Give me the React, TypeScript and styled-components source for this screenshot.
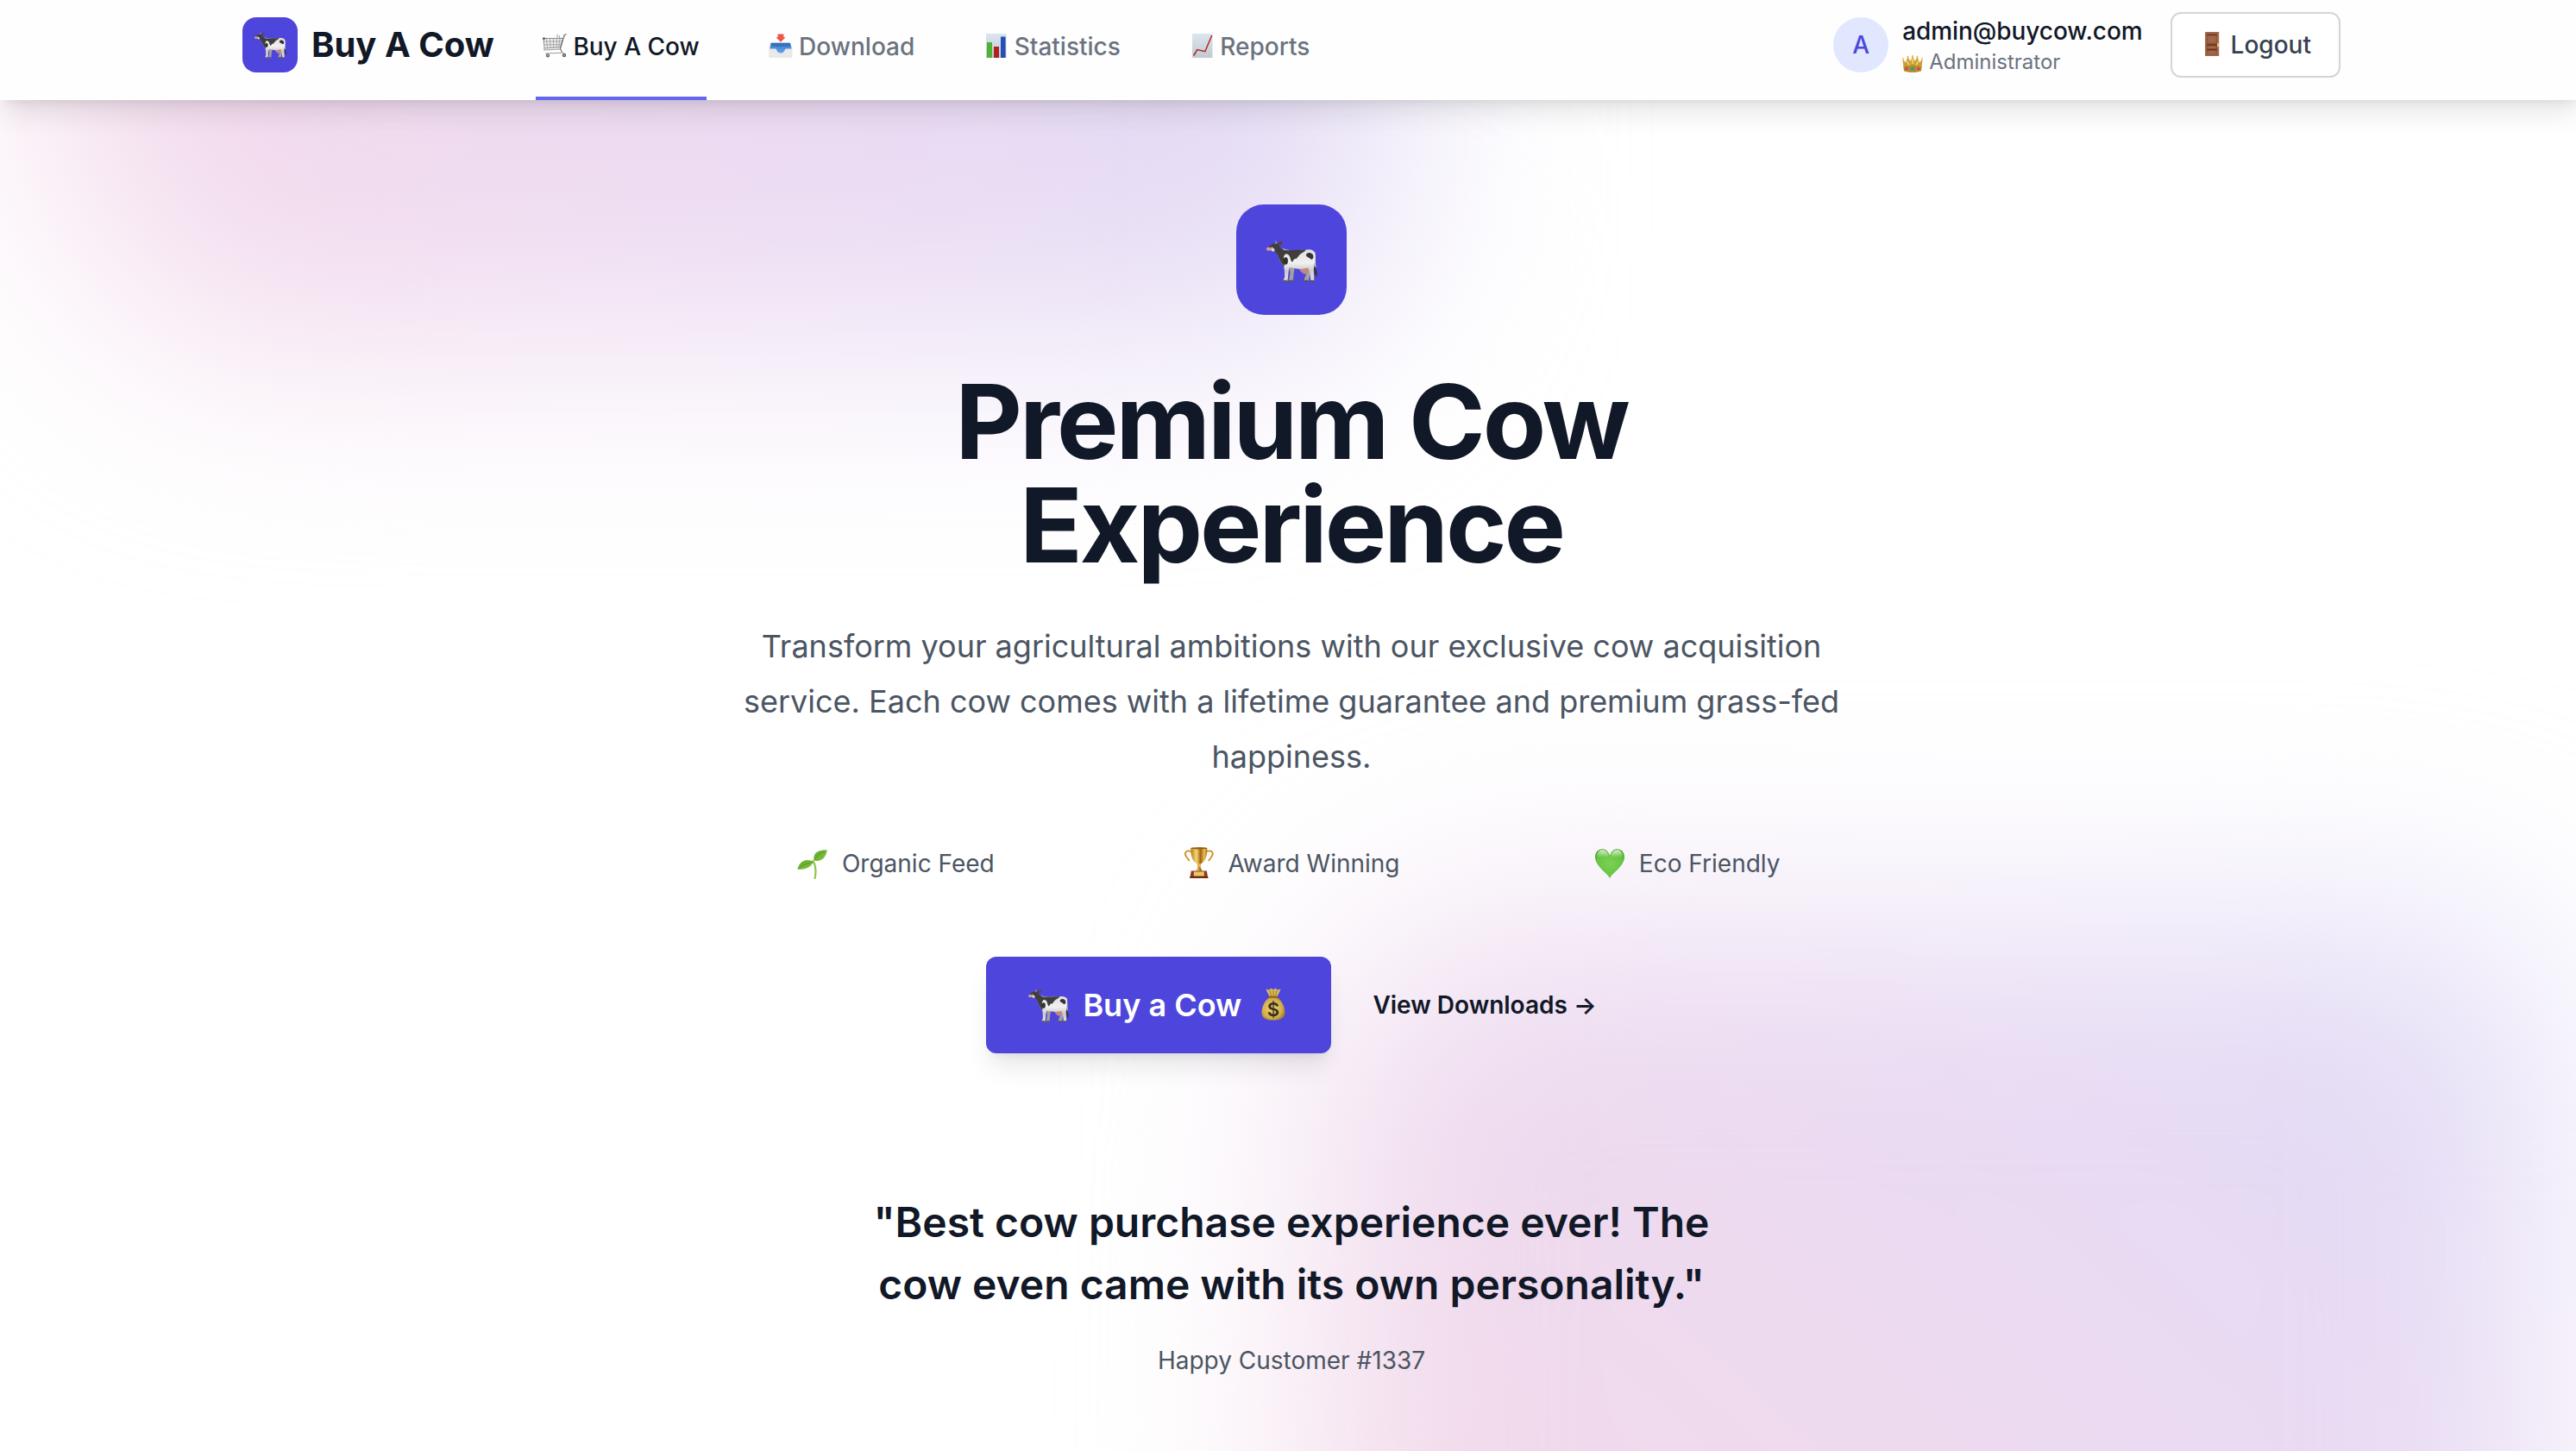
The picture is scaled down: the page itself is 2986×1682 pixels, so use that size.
import React from 'react';
import styled, { createGlobalStyle, css } from 'styled-components';

const GlobalStyle = createGlobalStyle`
  *, *::before, *::after { box-sizing: border-box; }
  html, body { margin: 0; padding: 0; background: #ffffff; }
  body {
    overflow: hidden;
    font-family: Inter, "Liberation Sans", sans-serif;
    color: #111827;
    -webkit-font-smoothing: antialiased;
  }
`;

/* ---------- shell ---------- */

const Page = styled.div`
  position: relative;
  isolation: isolate;
  width: 2994px;
  height: 1682px;
  overflow: hidden;
  display: flex;
  flex-direction: column;
  background: #ffffff;
`;

const Backdrop = styled.div`
  position: absolute;
  inset: 0;
  z-index: -1;
  overflow: hidden;
`;

const Glow = styled.div<{ $place: 'top' | 'bottom' }>`
  position: absolute;
  filter: blur(128px);
  ${({ $place }) =>
    $place === 'top'
      ? css`
          left: -80px;
          top: -520px;
          width: 1690px;
          height: 920px;
          & > div {
            background: linear-gradient(78deg, #f3d9eb 14%, #ebdaf2 54%, #e3dbf5 88%);
            clip-path: polygon(5% 0, 100% 0, 100% 86%, 94% 100%, 18% 100%, 9% 80%);
          }
        `
      : css`
          left: 1520px;
          top: 1070px;
          width: 1430px;
          height: 1000px;
          & > div {
            background: linear-gradient(42deg, #f2d9ea 22%, #ebdaf1 56%, #e2dbf6 88%);
            clip-path: polygon(1% 14%, 10% 0, 94% 0, 100% 8%, 100% 100%, 0 100%);
          }
        `}
`;

const GlowShape = styled.div`
  width: 100%;
  height: 100%;
`;

/* ---------- header ---------- */

const Header = styled.header`
  flex: none;
  height: 116px;
  background: #fefefe;
  box-shadow: 0 20px 30px -6px rgba(0, 0, 0, 0.1), 0 8px 12px -8px rgba(0, 0, 0, 0.1);
`;

const HeaderInner = styled.div`
  width: 2560px;
  height: 116px;
  margin: 0 auto;
  padding: 0 64px;
  display: flex;
  justify-content: space-between;
`;

const Cluster = styled.div<{ $gap: number }>`
  display: flex;
  align-items: center;
  height: 104px;
  gap: ${({ $gap }) => $gap}px;
`;

const Brand = styled.div`
  display: flex;
  align-items: center;
  gap: 16px;
  width: 292px;
  white-space: nowrap;
`;

const Tile = styled.div<{ $size: number; $radius: number }>`
  flex: none;
  display: flex;
  align-items: center;
  justify-content: center;
  width: ${({ $size }) => $size}px;
  height: ${({ $size }) => $size}px;
  border-radius: ${({ $radius }) => $radius}px;
  background: #4e46dc;
`;

const BrandName = styled.span`
  font-size: 40px;
  line-height: 56px;
  font-weight: 700;
`;

const Nav = styled.nav`
  display: flex;
  align-items: stretch;
  gap: 64px;
  height: 116px;
  align-self: flex-start;
`;

const NavLink = styled.a<{ $active?: boolean }>`
  display: flex;
  align-items: center;
  gap: 7.4px;
  height: 116px;
  padding: 0 8px 4px;
  border-bottom: 4px solid ${({ $active }) => ($active ? '#6366f1' : 'transparent')};
  color: ${({ $active }) => ($active ? '#111827' : '#6b7280')};
  font-size: 28px;
  line-height: 40px;
  font-weight: 500;
  white-space: nowrap;
`;

const Account = styled.div`
  display: flex;
  align-items: center;
  gap: 16px;
`;

const Avatar = styled.div`
  display: flex;
  align-items: center;
  justify-content: center;
  width: 64px;
  height: 64px;
  border-radius: 50%;
  background: #e0e7ff;
  color: #4e46dc;
  font-size: 28px;
  font-weight: 500;
`;

const Identity = styled.div`
  display: flex;
  flex-direction: column;
`;

const Email = styled.span`
  font-size: 28px;
  line-height: 40px;
  font-weight: 500;
  letter-spacing: -0.06px;
`;

const Role = styled.span`
  display: flex;
  align-items: center;
  gap: 7px;
  font-size: 24px;
  line-height: 32px;
  color: #6b7280;
`;

const LogoutButton = styled.button`
  display: flex;
  align-items: center;
  gap: 8px;
  height: 76px;
  padding: 0 32px;
  border: 2px solid #d1d5db;
  border-radius: 12px;
  background: #ffffff;
  color: #374151;
  font: 500 28px/40px Inter, "Liberation Sans", sans-serif;
`;

const Icon = styled.svg<{ $w: number; $h: number; $dy?: number }>`
  flex: none;
  display: block;
  overflow: visible;
  width: ${({ $w }) => $w}px;
  height: ${({ $h }) => $h}px;
  margin-top: ${({ $dy = 0 }) => ($dy > 0 ? $dy : 0)}px;
  margin-bottom: ${({ $dy = 0 }) => ($dy < 0 ? -$dy : 0)}px;
`;

/* ---------- hero ---------- */

const Hero = styled.main`
  display: flex;
  flex-direction: column;
  align-items: center;
  padding-top: 121px;
  text-align: center;
`;

const Title = styled.h1`
  margin: 64px 0 0;
  font-size: 120px;
  line-height: 120px;
  font-weight: 700;
  letter-spacing: -0.025em;
`;

const Lead = styled.p`
  width: 1344px;
  margin: 48px 0 0;
  font-size: 36px;
  line-height: 64px;
  color: #4b5563;
`;

const Features = styled.ul`
  display: grid;
  grid-template-columns: repeat(3, 1fr);
  gap: 32px;
  width: 1344px;
  margin: 64px 0 0;
  padding: 0;
  list-style: none;
`;

const Feature = styled.li`
  display: flex;
  align-items: center;
  justify-content: center;
  gap: 16px;
  height: 56px;
  font-size: 28px;
  line-height: 40px;
  color: #4b5563;
`;

const Actions = styled.div`
  display: flex;
  align-items: center;
  gap: 48px;
  margin-top: 80px;
`;

const BuyButton = styled.button`
  display: flex;
  align-items: center;
  gap: 16px;
  width: 400px;
  height: 112px;
  padding: 0 0 0 49px;
  border: 0;
  border-radius: 12px;
  background: #4e46dc;
  color: #ffffff;
  font: 600 36px/56px Inter, "Liberation Sans", sans-serif;
  white-space: nowrap;
  box-shadow: 0 20px 30px -6px rgba(0, 0, 0, 0.1), 0 8px 12px -8px rgba(0, 0, 0, 0.1);
`;

const TextLink = styled.a`
  font-size: 28px;
  line-height: 48px;
  font-weight: 600;
  white-space: nowrap;
`;

const Quote = styled.blockquote`
  width: 1024px;
  margin: 160px 0 0;
  font-size: 48px;
  line-height: 72px;
  font-weight: 600;
`;

const Author = styled.p`
  margin: 32px 0 0;
  font-size: 28px;
  line-height: 40px;
  color: #4b5563;
`;

/* ---------- drawings ---------- */

const Cow = ({ w, dy }: { w: number; dy?: number }) => (
  <Icon $w={w} $h={(w * 49) / 59} $dy={dy} viewBox="0 0 59 49">
    <defs>
      <linearGradient id="hide" x1="0" y1="0" x2="0" y2="1">
        <stop offset="0" stopColor="#dcdcdc" />
        <stop offset="0.45" stopColor="#f1f1f1" />
        <stop offset="0.68" stopColor="#cfcdcb" />
        <stop offset="1" stopColor="#e2e0de" />
      </linearGradient>
    </defs>
    <path d="M55.5 14C57 20 55.6 27 57 32" fill="none" stroke="#c9c7c5" strokeWidth="1.5" />
    <path d="M56.500 31C58 34 59 38 58.600 42.500C56 42 54.800 37 55.200 32Z" fill="#3a3837" />
    <path d="M26.500 30L27.500 39L26.500 45L25.500 48.300H31L31 45L31.800 38L33 31Z" fill="#a3a19e" />
    <path d="M44 30L47 37L44.500 44L43.200 48.300H48.500L49.800 44L52 36L51 30Z" fill="#a3a19e" />
    <path d="M37.500 31.500C38.500 36 41 38.800 42.500 38.300L43 40.500L44.500 39L46.500 40L47.500 38C49.500 36 50 33 49 31Z" fill="#c08a84" />
    <path d="M11 13L16 9L23 11.500C32 13 44 11 50 11.200C55 11.500 57 15 56.500 20C56.200 25 55.700 29 55 32C54.500 36 55.600 40 55.200 48.300H51.200C51.400 42 50.500 37 48.500 32.500C44 33 40 34.500 34 33.200C30 32.600 28.500 32.500 26.800 32L25.600 37L25 44L24 48.300H19.200L21.200 43L21 36L20.200 31C17 27 14 22 13.500 18Z" fill="url(#hide)" />
    <path d="M2 8C5 6.500 6 5 8 4.500L12 4L14 4.500L15 8L21 12C26 12.500 36 11.500 46 11.300C44 14 42.500 14.500 40 16C36 19 36 22.500 33 22C31 22.500 31 26 29.500 25.500C27.500 23.500 28 18.500 25 17C22 15 20 18 20 21L21 31L19.500 30C16 26 14 21 13 17.500L10 13L4 12Z" fill="#403e3d" />
    <path d="M6 8L10 11.500L8 14L5 12Z" fill="#d9d7d5" />
    <ellipse cx="2.800" cy="10.600" rx="2.800" ry="2.200" fill="#d69b93" />
    <path d="M10.300 4.500L10.600 0.200L12.500 4.500Z" fill="#b7a17d" />
    <path d="M14 4C15 1.300 17.500 .6 18.600 2.500C19 4.500 16.500 7 14 6Z" fill="#5a4341" />
    <ellipse cx="22.300" cy="24.500" rx="2.600" ry="4.200" fill="#302f2f" />
    <path d="M46 17C48 14 52.500 14.500 54 17.500C55.300 20.500 53.500 23.500 51.500 22.500C49.500 20 46 20.500 46 17Z" fill="#353333" />
    <path d="M19.600 46.700H24L23.400 48.900H18.900ZM26 46.700H31L30.600 48.700H25.400ZM43.900 46.800H48.800L48.200 48.900H43ZM51.200 46.700H55.200L55 48.900H50.800Z" fill="#55504d" />
  </Icon>
);

const Cart = () => (
  <Icon $w={28} $h={28} $dy={-2} viewBox="0 0 28 28">
    <g fill="none" stroke="#8f8f8f">
      <path d="M.8 5.500H23.500L20.500 15.800L2.200 17Z" fill="#ededed" strokeWidth="1" />
      <path d="M4.500 5.500L5.500 17M8.500 5.500L9 16.500M12.500 5.500V16.500M16.500 5.500L16 16.500M20 5.500L18.700 16M1.200 9H22.500M1.600 12.800H21.500" strokeWidth=".7" />
      <path d="M27.500 .5L25 2L20.500 17.500L22.500 21.500" stroke="#6f6f6f" strokeWidth="1.200" />
      <path d="M2 17L1.500 19L20 18M3 23L24.500 22.200M17 .8V5M19 2L20 5" stroke="#9b9b9b" strokeWidth="1" />
    </g>
    <rect x="0" y="4.600" width="3" height="2" fill="#34557c" />
    <circle cx="6" cy="25.400" r="2.100" fill="#66605c" />
    <circle cx="25" cy="25" r="2.200" fill="#66605c" />
    <circle cx="6" cy="25.400" r=".8" fill="#c9c3be" />
    <circle cx="25" cy="25" r=".8" fill="#c9c3be" />
  </Icon>
);

const InboxTray = () => (
  <Icon $w={28} $h={28} $dy={-2} viewBox="0 0 28 28">
    <defs>
      <linearGradient id="tray" x1="0" y1="0" x2="0" y2="1">
        <stop offset="0" stopColor="#3d7cc9" />
        <stop offset="1" stopColor="#5ea2ee" />
      </linearGradient>
    </defs>
    <path d="M.3 17L3 10.800H24.600L27.500 17V26.500Q27.500 28 26 28H1.800Q.3 28 .3 26.500Z" fill="#e9e9e6" />
    <path d="M2.700 10.800H25L26.600 17.500H20C18.500 17.500 18.800 22.500 14 22.500C9.200 22.500 9.400 17.500 8 17.500H1.200Z" fill="url(#tray)" />
    <path d="M3 10.800H24.800L25.600 14C23 15.500 5 15.500 2.200 14Z" fill="#2f66ad" opacity=".6" />
    <path d="M10.600 .4H17.400V4.300H19.600L14 9.800L8.400 4.300H10.600Z" fill="#e9564a" />
  </Icon>
);

const ChartPaper = () => (
  <>
    <defs>
      <linearGradient id="paper" x1="0" y1="0" x2="0" y2="1">
        <stop offset="0" stopColor="#dbe6f0" />
        <stop offset="1" stopColor="#c3c9ce" />
      </linearGradient>
    </defs>
    <rect x="3" y="0" width="23.500" height="28" fill="url(#paper)" />
  </>
);

const BarChart = () => (
  <Icon $w={28} $h={28} $dy={-2} viewBox="0 0 28 28">
    <ChartPaper />
    <rect x="4" y="10" width="6" height="18" fill="#4fb238" />
    <rect x="12" y="15" width="6" height="13" fill="#b0201f" />
    <rect x="20" y="3.500" width="5.600" height="24.500" fill="#2350b8" />
  </Icon>
);

const TrendChart = () => (
  <Icon $w={28} $h={28} $dy={-2} viewBox="0 0 28 28">
    <ChartPaper />
    <path d="M4.600 25.500L8.800 18.500L17.800 20.700L25.800 2" fill="none" stroke="#b32424" strokeWidth="1.500" />
  </Icon>
);

const Crown = () => (
  <Icon $w={24} $h={20} $dy={3} viewBox="0 0 24 20">
    <path d="M.3 4L4 8.500L6.400 2L9.500 7L12 .8L14.500 7L17.600 2L20 8.500L23.700 4L22 18.200Q12 21.200 2 18.200Z" fill="#cfa02f" />
    <path d="M1.600 13Q12 10 22.400 13L21.800 18.200Q12 21.200 2.200 18.200Z" fill="#bd8926" />
    <path d="M5.500 7L8 11.500M18.500 7L16 11.500M12 4V10" stroke="#f0d573" strokeWidth="1.600" />
    <circle cx="1" cy="4" r="1" fill="#e7c052" />
    <circle cx="6.500" cy="1.900" r="1.200" fill="#e7c052" />
    <circle cx="12" cy="1.100" r="1.200" fill="#e7c052" />
    <circle cx="17.500" cy="1.900" r="1.200" fill="#e7c052" />
    <circle cx="23" cy="4" r="1" fill="#e7c052" />
    <circle cx="12" cy="15.800" r="2.300" fill="#2fa08c" />
    <circle cx="5" cy="15.400" r="1.500" fill="#c0398f" />
    <circle cx="19" cy="15.400" r="1.500" fill="#c0398f" />
  </Icon>
);

const Door = () => (
  <Icon $w={28} $h={28} $dy={-2} viewBox="0 0 28 28">
    <rect x="6" y="0" width="16.200" height="28" rx=".6" fill="#a3674a" />
    <rect x="8" y="2.800" width="12" height="23" fill="#8f563b" />
    <path d="M8 3.200H20M8 15H20M8 20.500H20" stroke="#63341f" strokeWidth="1.300" />
    <path d="M9.500 5H18.500V12.500H9.500ZM9.500 16.800H18.500V19H9.500ZM9.500 22.300H18.500V25H9.500Z" fill="#a3674a" />
    <rect x="20" y="13" width="2" height="4.200" rx="1" fill="#e9c45c" />
  </Icon>
);

const Seedling = () => (
  <Icon $w={36} $h={36} $dy={1} viewBox="0 0 36 36">
    <defs>
      <linearGradient id="leaf" x1="0" y1="0" x2="1" y2="1">
        <stop offset="0" stopColor="#5fa92b" />
        <stop offset="1" stopColor="#86c440" />
      </linearGradient>
    </defs>
    <path d="M18.500 14C22 20 22 27 20.600 34" fill="none" stroke="#8cc84b" strokeWidth="2.200" strokeLinecap="round" />
    <path d="M19.500 13.500C18 5 24 1 34.800 1.200C33.500 10 28 15.500 19.500 13.500Z" fill="url(#leaf)" />
    <path d="M18.800 15C13 11 3 12.500 .3 23.800C9 24 16 22 18.800 15Z" fill="url(#leaf)" />
    <path d="M20 13C23 8 27 5 32 3M18 15C12 17 6 19 2 22.500" fill="none" stroke="#4b8f22" strokeWidth=".8" />
  </Icon>
);

const Trophy = () => (
  <Icon $w={36} $h={36} $dy={-2} viewBox="-.8 0 36 36">
    <defs>
      <linearGradient id="gold" x1="0" y1="0" x2="1" y2="0">
        <stop offset="0" stopColor="#b77a17" />
        <stop offset=".35" stopColor="#f6d878" />
        <stop offset=".6" stopColor="#9c6410" />
        <stop offset=".82" stopColor="#eec04e" />
        <stop offset="1" stopColor="#a66f14" />
      </linearGradient>
    </defs>
    <path d="M9 5C3 3 .5 6.500 3 10.500C5 13.500 6 14.500 7 16M27 5C33 3 35.500 6.500 33 10.500C31 13.500 30 14.500 29 16" fill="none" stroke="#c99223" strokeWidth="1.800" />
    <path d="M8.500 1Q18 -.6 27.500 1C28 10 25 17.500 19.800 19.500V24L22 27.500H14L16.200 24V19.500C11 17.500 8 10 8.500 1Z" fill="url(#gold)" />
    <ellipse cx="18" cy="1.300" rx="9.400" ry="1.100" fill="#8f5d13" />
    <circle cx="18" cy="21" r="2.200" fill="#e3b447" />
    <path d="M9 27.500H27L28.500 36H7.500Z" fill="#8f3b1c" />
    <path d="M7.500 34H28.500V36H7.500Z" fill="#6d2912" />
    <rect x="12" y="28.500" width="12" height="5" fill="#e9c66a" />
  </Icon>
);

const Heart = () => (
  <Icon $w={36} $h={36} $dy={-1} viewBox="0 0 36 36">
    <defs>
      <radialGradient id="heart" cx=".5" cy=".5" r=".62">
        <stop offset="0" stopColor="#7bd255" />
        <stop offset=".7" stopColor="#68c441" />
        <stop offset="1" stopColor="#3f9f2a" />
      </radialGradient>
      <linearGradient id="gloss" x1="0" y1="0" x2="0" y2="1">
        <stop offset="0" stopColor="#fff" stopOpacity=".75" />
        <stop offset="1" stopColor="#fff" stopOpacity="0" />
      </linearGradient>
    </defs>
    <path d="M18 35C15.500 29.500 1 21 1 10.500C1 5 4.500 1.200 9.300 1.200C13.500 1.200 16.500 3.800 18 8.500C19.500 3.800 22.500 1.200 26.700 1.200C31.500 1.200 35 5 35 10.500C35 21 20.500 29.500 18 35Z" fill="url(#heart)" />
    <path d="M2.800 9.500C3.300 4.500 6 2.300 9.300 2.300C13 2.300 15.500 5 16.500 9.500C12 11.500 7 11.500 2.800 9.500ZM33.200 9.500C32.700 4.500 30 2.300 26.700 2.300C23 2.300 20.500 5 19.500 9.500C24 11.500 29 11.500 33.200 9.500Z" fill="url(#gloss)" />
  </Icon>
);

const DollarSign = styled.text`
  font: 600 22px Inter, "Liberation Sans", sans-serif;
  text-anchor: middle;
  fill: #39301a;
`;

const MoneyBag = () => (
  <Icon $w={36} $h={38} $dy={-3} viewBox="-7 0 36 38">
    <defs>
      <radialGradient id="bag" cx=".45" cy=".5" r=".6">
        <stop offset="0" stopColor="#ecd47c" />
        <stop offset=".7" stopColor="#d3ae49" />
        <stop offset="1" stopColor="#9c7725" />
      </radialGradient>
    </defs>
    <path d="M9.500 11C4 15 .5 22 .5 29C.5 35 5 37.500 14 37.500C23 37.500 27.500 35 27.500 29C27.500 22 24 15 18.500 11Z" fill="url(#bag)" />
    <path d="M5.500 1.500L9 2.500L11 .8L14 2L17 .8L19 2.500L22.500 1.500C21.500 5 19.500 7 18.800 10H9.200C8.500 7 6.500 5 5.500 1.500Z" fill="#d9b85a" />
    <path d="M10 3L11.500 9M14 3V9M18 3L16.500 9" stroke="#a37d2c" strokeWidth="1" />
    <rect x="8.500" y="9.500" width="11" height="2.200" rx="1" fill="#8c6320" />
    <DollarSign x="14" y="32.500">$</DollarSign>
  </Icon>
);

/* ---------- page ---------- */

const navItems = [
  { label: 'Buy A Cow', icon: <Cart />, active: true },
  { label: 'Download', icon: <InboxTray /> },
  { label: 'Statistics', icon: <BarChart /> },
  { label: 'Reports', icon: <TrendChart /> },
];

const features = [
  { label: 'Organic Feed', icon: <Seedling /> },
  { label: 'Award Winning', icon: <Trophy /> },
  { label: 'Eco Friendly', icon: <Heart /> },
];

export default function App() {
  return (
    <>
      <GlobalStyle />
      <Page>
        <Backdrop>
          <Glow $place="top"><GlowShape /></Glow>
          <Glow $place="bottom"><GlowShape /></Glow>
        </Backdrop>
        <Header>
          <HeaderInner>
            <Cluster $gap={48}>
              <Brand>
                <Tile $size={64} $radius={16}><Cow w={37} dy={1} /></Tile>
                <BrandName>Buy A Cow</BrandName>
              </Brand>
              <Nav>
                {navItems.map((item) => (
                  <NavLink key={item.label} $active={item.active}>
                    {item.icon}
                    <span>{item.label}</span>
                  </NavLink>
                ))}
              </Nav>
            </Cluster>
            <Cluster $gap={32}>
              <Account>
                <Avatar>A</Avatar>
                <Identity>
                  <Email>admin@buycow.com</Email>
                  <Role><Crown />Administrator</Role>
                </Identity>
              </Account>
              <LogoutButton><Door />Logout</LogoutButton>
            </Cluster>
          </HeaderInner>
        </Header>
        <Hero>
          <Tile $size={128} $radius={32}><Cow w={59} dy={3} /></Tile>
          <Title>Premium Cow<br />Experience</Title>
          <Lead>
            Transform your agricultural ambitions with our exclusive cow acquisition service. Each
            cow comes with a lifetime guarantee and premium grass-fed happiness.
          </Lead>
          <Features>
            {features.map((f) => (
              <Feature key={f.label}>
                {f.icon}
                <span>{f.label}</span>
              </Feature>
            ))}
          </Features>
          <Actions>
            <BuyButton>
              <Cow w={47} dy={2} />
              <span>Buy a Cow</span>
              <MoneyBag />
            </BuyButton>
            <TextLink>View Downloads →</TextLink>
          </Actions>
          <Quote>"Best cow purchase experience ever! The<br />cow even came with its own personality."</Quote>
          <Author>Happy Customer #1337</Author>
        </Hero>
      </Page>
    </>
  );
}
